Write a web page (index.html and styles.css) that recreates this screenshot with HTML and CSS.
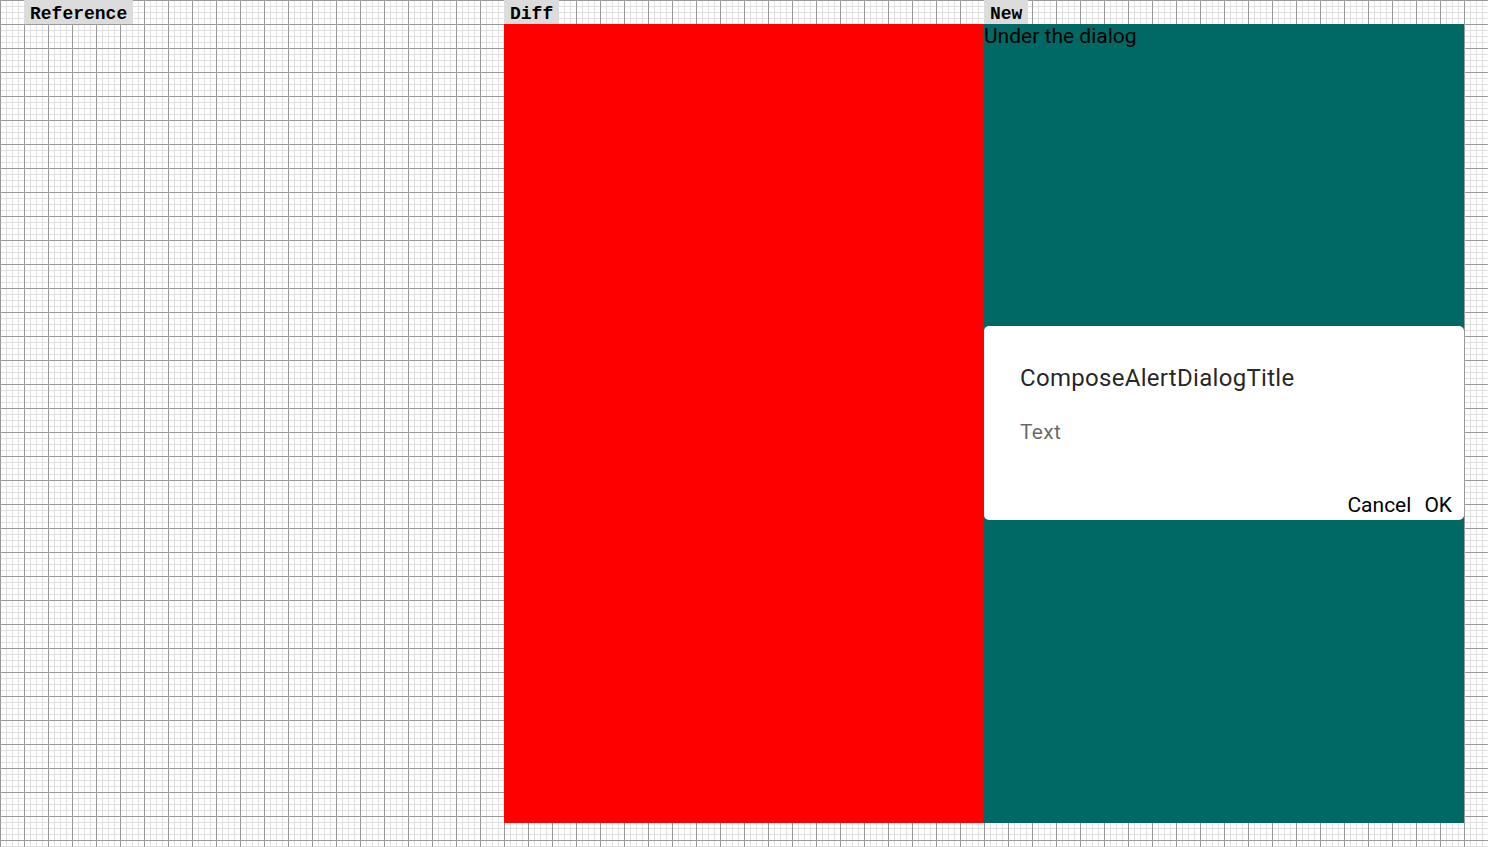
FILE: index.html
```html
<!DOCTYPE html>
<html>
<head>
<meta charset="utf-8">
<link rel="stylesheet" href="styles.css">
</head>
<body>
<div class="sheet">
  <div class="column">
    <div class="label">Reference</div>
    <div class="panel panel-empty"></div>
  </div>
  <div class="column">
    <div class="label">Diff</div>
    <div class="panel panel-diff"></div>
  </div>
  <div class="column">
    <div class="label">New</div>
    <div class="panel panel-new">
      <div class="under">Under the dialog</div>
      <div class="dialog">
        <div class="dialog-title">ComposeAlertDialogTitle</div>
        <div class="dialog-text">Text</div>
        <div class="dialog-buttons">
          <span class="dialog-button">Cancel</span>
          <span class="dialog-button">OK</span>
        </div>
      </div>
    </div>
  </div>
</div>
</body>
</html>
```

FILE: styles.css
```css
html, body {
  margin: 0;
  padding: 0;
}
body {
  width: 1488px;
  height: 847px;
  overflow: hidden;
  background-color: #ffffff;
  background-image:
    linear-gradient(to right, #999999 1px, transparent 1px),
    linear-gradient(to bottom, #999999 1px, transparent 1px),
    linear-gradient(to right, #e0e0e0 1px, transparent 1px),
    linear-gradient(to bottom, #e0e0e0 1px, transparent 1px);
  background-size: 24px 24px, 24px 24px, 6px 6px, 6px 6px;
  font-family: Roboto, "Liberation Sans", sans-serif;
}
.sheet {
  display: flex;
  padding-left: 24px;
}
.column {
  width: 480px;
  display: flex;
  flex-direction: column;
  align-items: flex-start;
}
.label {
  height: 24px;
  box-sizing: border-box;
  padding: 2px 6px 0;
  line-height: 24px;
  background: #dcdcdc;
  font-family: "Liberation Mono", "Courier New", monospace;
  font-weight: bold;
  font-size: 18px;
  color: #000;
  overflow: hidden;
}
.panel {
  width: 480px;
  height: 799px;
  position: relative;
}
.panel-diff {
  background: #ff0000;
}
.panel-new {
  background: #006966;
}
.under {
  font-size: 21px;
  line-height: 24px;
  color: #000;
}
.dialog {
  position: absolute;
  left: 0;
  right: 0;
  top: 302px;
  height: 194px;
  box-sizing: border-box;
  background: #ffffff;
  border-radius: 5px;
  padding: 38px 12px 0 36px;
  display: flex;
  flex-direction: column;
}
.dialog-title {
  font-size: 24px;
  line-height: 28px;
  letter-spacing: 0.3px;
  color: rgba(0, 0, 0, 0.87);
}
.dialog-text {
  margin-top: 28px;
  font-size: 21px;
  line-height: 24px;
  letter-spacing: 0.3px;
  color: rgba(0, 0, 0, 0.6);
}
.dialog-buttons {
  margin-top: 49px;
  display: flex;
  justify-content: flex-end;
  gap: 13px;
}
.dialog-button {
  font-size: 21px;
  line-height: 24px;
  color: #000;
}
```
